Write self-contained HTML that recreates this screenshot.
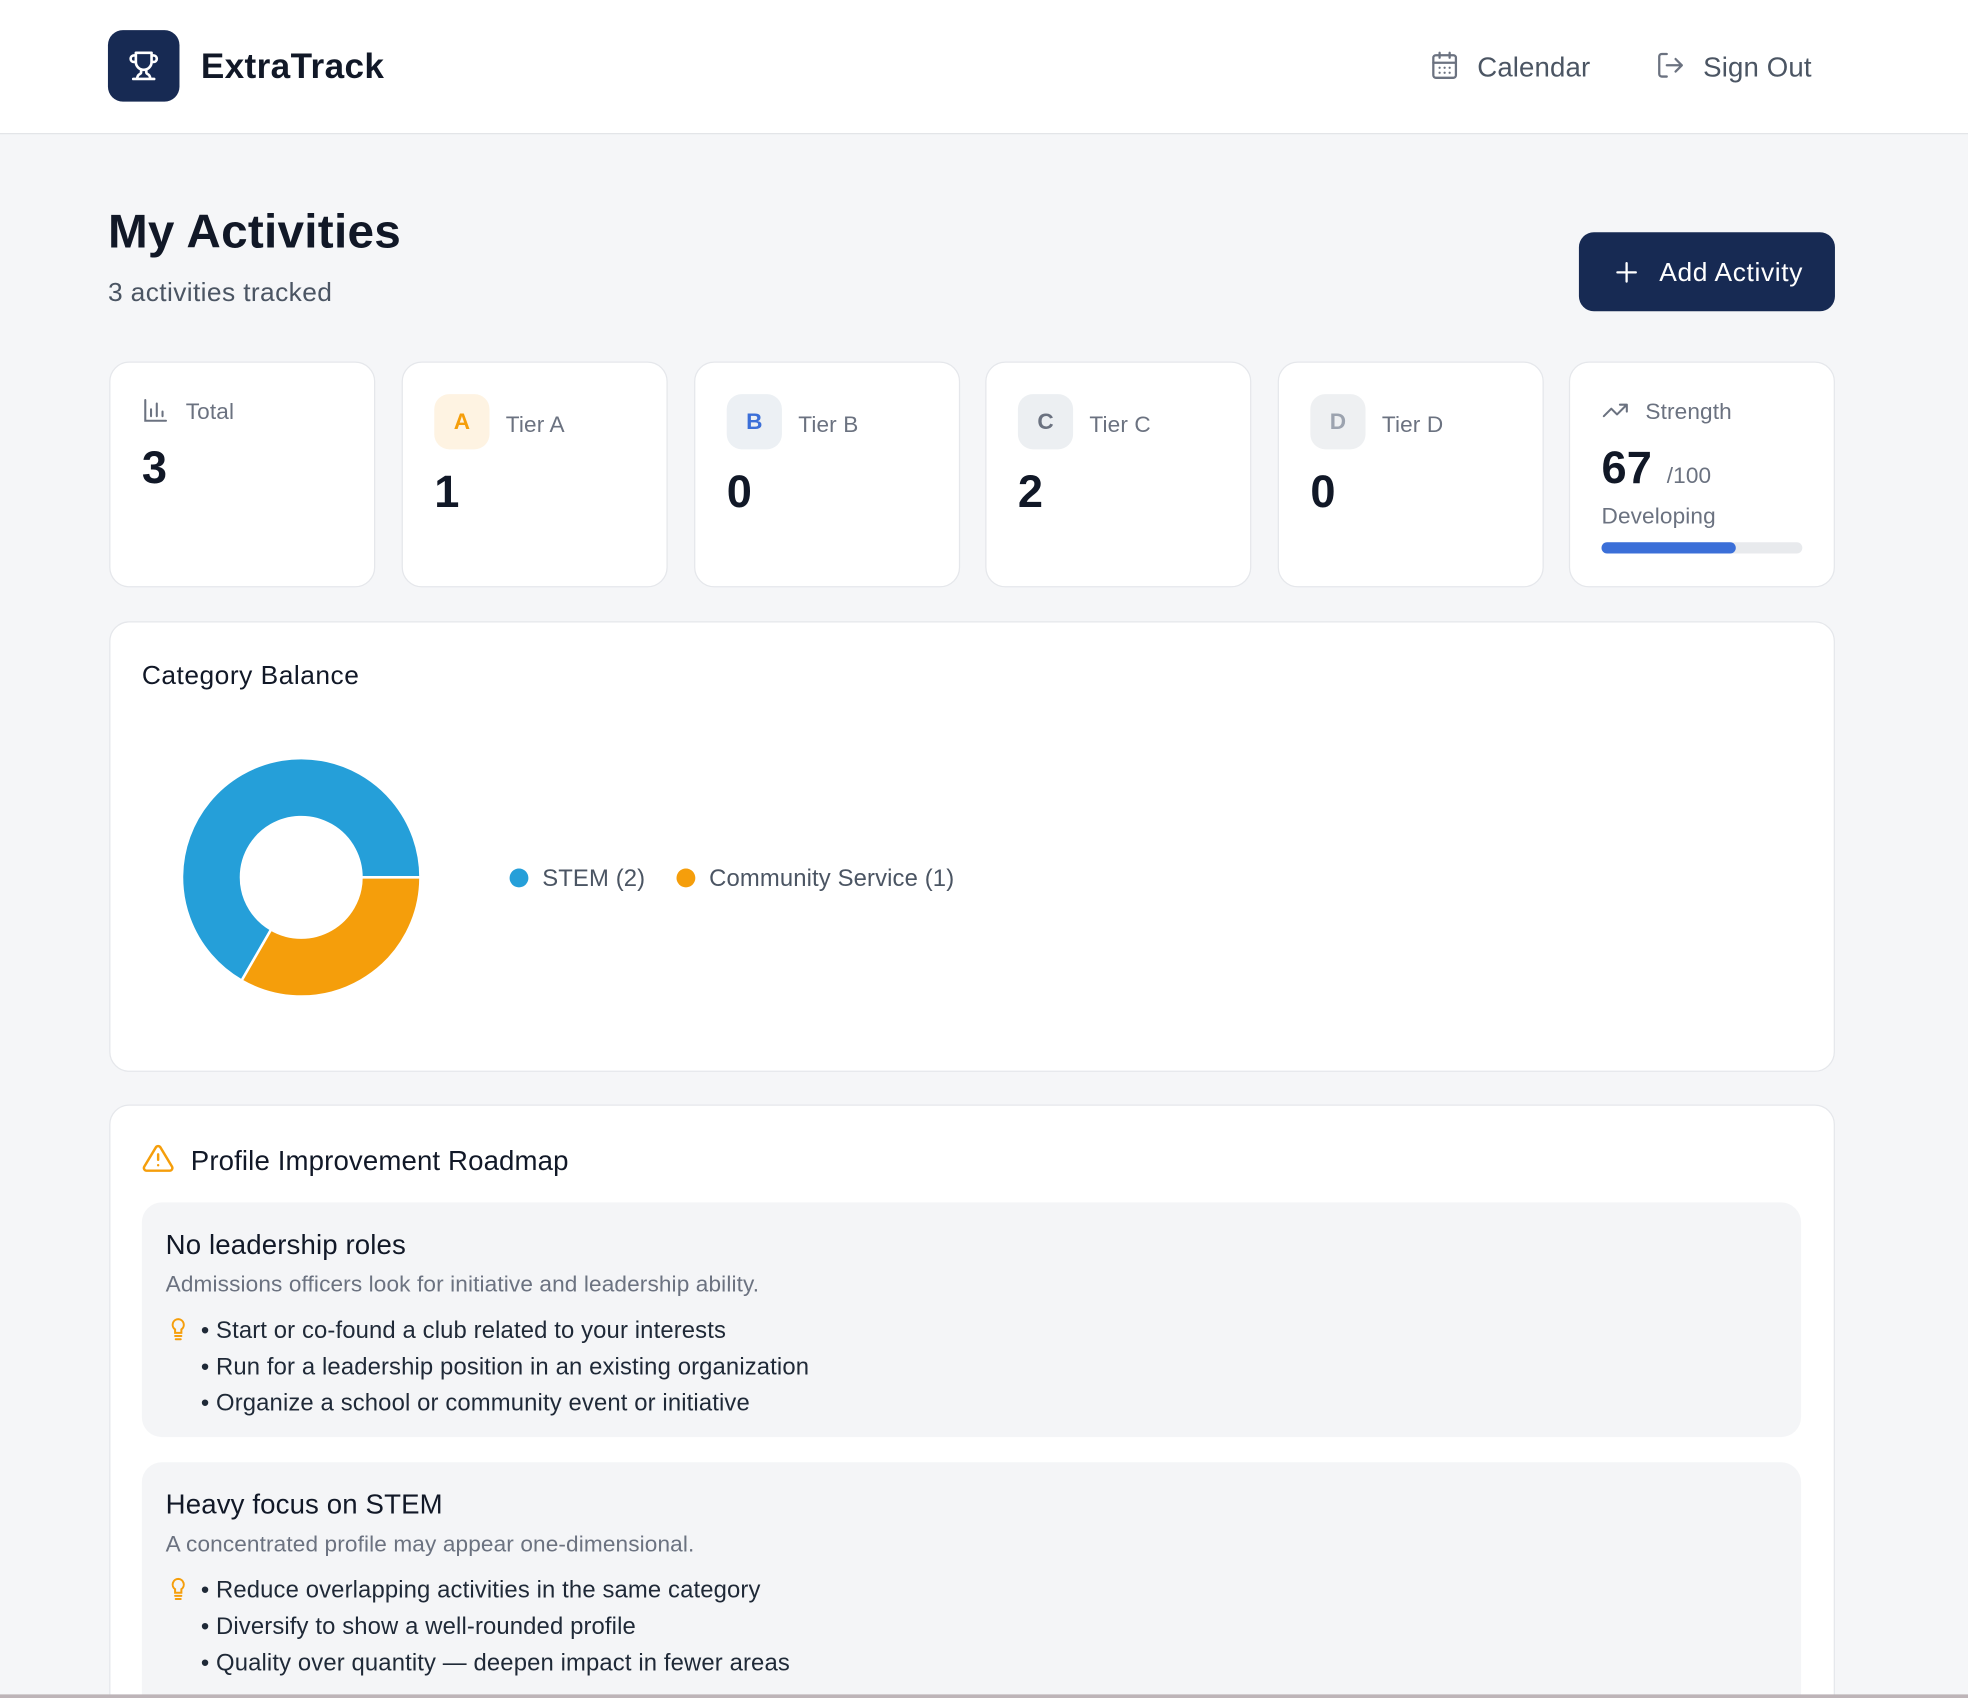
<!DOCTYPE html>
<html><head><meta charset="utf-8"><style>
html,body{margin:0;padding:0;width:1968px;height:1698px;overflow:hidden;background:#f5f6f8;font-family:"Liberation Sans",Arial,sans-serif;}
#w{position:absolute;left:0;top:0;width:1568px;height:1353px;transform:scale(1.25510);transform-origin:0 0;background:#f5f6f8;overflow:hidden;}
.a{position:absolute;}
.hdr{left:0;top:0;width:1568px;height:106px;background:#fff;border-bottom:1px solid #e2e4e8;}
.card{background:#fff;border:1.5px solid #e5e7eb;border-radius:16px;box-sizing:border-box;}
.lbl{font-size:18px;color:#6b7280;}
.num{font-size:36px;font-weight:bold;color:#111827;}
.badge{width:44px;height:44px;border-radius:12px;font-weight:bold;font-size:18px;display:flex;align-items:center;justify-content:center;}
.box{background:#f4f5f7;border-radius:16px;left:113px;width:1322px;}
.t{font-size:22px;color:#111827;}
.d{font-size:18px;color:#6b7280;}
.li{font-size:19px;color:#1f2937;}
.lbl,.num,.t,.d,.li,[style*="font-size"]{margin-top:2px;letter-spacing:0.1px;}
</style></head><body><div id="w">
<div class="a hdr"></div>
<div class="a" style="left:86px;top:24px;width:57px;height:57px;border-radius:12px;background:#172a53;"></div>
<svg class="a" style="left:102px;top:40px" width="25" height="25" viewBox="0 0 24 24" fill="none" stroke="#fff" stroke-width="2" stroke-linecap="round" stroke-linejoin="round"><path d="M6 9H4.5a2.5 2.5 0 0 1 0-5H6M18 9h1.5a2.5 2.5 0 0 0 0-5H18M4 22h16M10 14.66V17c0 .55-.47.98-.97 1.21C7.85 18.75 7 20.24 7 22M14 14.66V17c0 .55.47.98.97 1.21C16.15 18.75 17 20.24 17 22M18 2H6v7a6 6 0 0 0 12 0V2Z"/></svg>
<div class="a" style="left:160px;top:35px;font-size:28px;font-weight:bold;color:#111827;letter-spacing:0.3px;">ExtraTrack</div>
<svg class="a" style="left:1139px;top:40px" width="24" height="24" viewBox="0 0 24 24" fill="none" stroke="#6b7280" stroke-width="1.8" stroke-linecap="round"><rect x="3" y="4" width="18" height="18" rx="2"/><path d="M8 2v4M16 2v4M3 10h18M8 14h.01M12 14h.01M16 14h.01M8 18h.01M12 18h.01M16 18h.01"/></svg>
<div class="a" style="left:1177px;top:39px;font-size:22px;color:#4b5563;">Calendar</div>
<svg class="a" style="left:1319px;top:40px" width="24" height="24" viewBox="0 0 24 24" fill="none" stroke="#6b7280" stroke-width="1.8" stroke-linecap="round" stroke-linejoin="round"><path d="M9 21H5a2 2 0 0 1-2-2V5a2 2 0 0 1 2-2h4M16 17l5-5-5-5M21 12H9"/></svg>
<div class="a" style="left:1357px;top:39px;font-size:22px;color:#4b5563;">Sign Out</div>

<div class="a" style="left:86px;top:162px;font-size:38px;font-weight:bold;color:#111827;letter-spacing:0.2px;">My Activities</div>
<div class="a" style="left:86px;top:220px;font-size:21px;color:#4b5563;letter-spacing:0.3px;">3 activities tracked</div>
<div class="a" style="left:1258px;top:185px;width:204px;height:63px;border-radius:12px;background:#172a53;"></div>
<svg class="a" style="left:1285px;top:206px" width="22" height="22" viewBox="0 0 24 24" fill="none" stroke="#fff" stroke-width="2" stroke-linecap="round"><path d="M12 4v16M4 12h16"/></svg>
<div class="a" style="left:1322px;top:204px;font-size:21px;color:#fff;letter-spacing:0.5px;">Add Activity</div>

<div class="a card" style="left:87px;top:288px;width:212px;height:180px;"></div>
<svg class="a" style="left:113px;top:316px" width="22" height="22" viewBox="0 0 24 24" fill="none" stroke="#6b7280" stroke-width="1.8" stroke-linecap="round"><path d="M3 3v18h18M8 17V11M13 17V6M18 17v-4"/></svg>
<div class="a lbl" style="left:148px;top:316px;">Total</div>
<div class="a num" style="left:113px;top:350px;">3</div>

<div class="a card" style="left:320px;top:288px;width:212px;height:180px;"></div>
<div class="a badge" style="left:346px;top:314px;background:#fef3e2;color:#f59e0b;">A</div>
<div class="a lbl" style="left:403px;top:326px;">Tier A</div>
<div class="a num" style="left:346px;top:369px;">1</div>

<div class="a card" style="left:553px;top:288px;width:212px;height:180px;"></div>
<div class="a badge" style="left:579px;top:314px;background:#ecf0f4;color:#3b6fd8;">B</div>
<div class="a lbl" style="left:636px;top:326px;">Tier B</div>
<div class="a num" style="left:579px;top:369px;">0</div>

<div class="a card" style="left:785px;top:288px;width:212px;height:180px;"></div>
<div class="a badge" style="left:811px;top:314px;background:#eceff2;color:#6b7280;">C</div>
<div class="a lbl" style="left:868px;top:326px;">Tier C</div>
<div class="a num" style="left:811px;top:369px;">2</div>

<div class="a card" style="left:1018px;top:288px;width:212px;height:180px;"></div>
<div class="a badge" style="left:1044px;top:314px;background:#eef0f2;color:#9ca3af;">D</div>
<div class="a lbl" style="left:1101px;top:326px;">Tier D</div>
<div class="a num" style="left:1044px;top:369px;">0</div>

<div class="a card" style="left:1250px;top:288px;width:212px;height:180px;"></div>
<svg class="a" style="left:1276px;top:316px" width="22" height="22" viewBox="0 0 24 24" fill="none" stroke="#6b7280" stroke-width="1.8" stroke-linecap="round" stroke-linejoin="round"><path d="M22 7l-8.5 8.5-5-5L2 17M16 7h6v6"/></svg>
<div class="a lbl" style="left:1311px;top:316px;">Strength</div>
<div class="a num" style="left:1276px;top:350px;">67</div>
<div class="a lbl" style="left:1328px;top:367px;">/100</div>
<div class="a lbl" style="left:1276px;top:399px;">Developing</div>
<div class="a" style="left:1276px;top:432px;width:160px;height:9px;border-radius:5px;background:#e8eaed;"></div>
<div class="a" style="left:1276px;top:432px;width:107px;height:9px;border-radius:5px;background:#3b6fd8;"></div>

<div class="a card" style="left:87px;top:495px;width:1375px;height:359px;"></div>
<div class="a" style="left:113px;top:525px;font-size:21px;color:#111827;letter-spacing:0.4px;">Category Balance</div>
<svg class="a" style="left:140px;top:599px" width="200" height="200" viewBox="-100 -100 200 200">
<path d="M95 0 A95 95 0 1 0 -47.5 82.27 L-24 41.57 A48 48 0 1 1 48 0 Z" fill="#259fd9" stroke="#fff" stroke-width="2"/>
<path d="M95 0 A95 95 0 0 1 -47.5 82.27 L-24 41.57 A48 48 0 0 0 48 0 Z" fill="#f59e0b" stroke="#fff" stroke-width="2"/>
</svg>
<div class="a" style="left:406px;top:692px;width:15px;height:15px;border-radius:50%;background:#259fd9;"></div>
<div class="a" style="left:432px;top:688px;font-size:19px;color:#4b5563;">STEM (2)</div>
<div class="a" style="left:539px;top:692px;width:15px;height:15px;border-radius:50%;background:#f59e0b;"></div>
<div class="a" style="left:565px;top:688px;font-size:19px;color:#4b5563;">Community Service (1)</div>

<div class="a card" style="left:87px;top:880px;width:1375px;height:520px;"></div>
<svg class="a" style="left:113px;top:910px" width="26" height="26" viewBox="0 0 24 24" fill="none" stroke="#f59e0b" stroke-width="1.8" stroke-linecap="round" stroke-linejoin="round"><path d="M10.3 3.9 1.8 18a2 2 0 0 0 1.7 3h17a2 2 0 0 0 1.7-3L13.7 3.9a2 2 0 0 0-3.4 0zM12 9v4M12 17h.01"/></svg>
<div class="a t" style="left:152px;top:910px;">Profile Improvement Roadmap</div>

<div class="a box" style="top:958px;height:187px;"></div>
<div class="a t" style="left:132px;top:977px;">No leadership roles</div>
<div class="a d" style="left:132px;top:1011px;">Admissions officers look for initiative and leadership ability.</div>
<svg class="a" style="left:134px;top:1049px" width="16" height="20" viewBox="0 0 16 20" fill="none" stroke="#f59e0b" stroke-width="1.6" stroke-linecap="round"><path d="M8 2a4.5 4.5 0 0 0-2.5 8.2V13h5v-2.8A4.5 4.5 0 0 0 8 2zM5.5 15.5h5M6 18h4"/></svg>
<div class="a li" style="left:160px;top:1048px;">• Start or co-found a club related to your interests</div>
<div class="a li" style="left:160px;top:1077px;">• Run for a leadership position in an existing organization</div>
<div class="a li" style="left:160px;top:1106px;">• Organize a school or community event or initiative</div>

<div class="a box" style="top:1165px;height:200px;"></div>
<div class="a t" style="left:132px;top:1184px;">Heavy focus on STEM</div>
<div class="a d" style="left:132px;top:1218px;">A concentrated profile may appear one-dimensional.</div>
<svg class="a" style="left:134px;top:1256px" width="16" height="20" viewBox="0 0 16 20" fill="none" stroke="#f59e0b" stroke-width="1.6" stroke-linecap="round"><path d="M8 2a4.5 4.5 0 0 0-2.5 8.2V13h5v-2.8A4.5 4.5 0 0 0 8 2zM5.5 15.5h5M6 18h4"/></svg>
<div class="a li" style="left:160px;top:1255px;">• Reduce overlapping activities in the same category</div>
<div class="a li" style="left:160px;top:1284px;">• Diversify to show a well-rounded profile</div>
<div class="a li" style="left:160px;top:1313px;">• Quality over quantity — deepen impact in fewer areas</div>
<div class="a" style="left:0;top:1350px;width:1568px;height:3px;background:#bdb4b8;"></div>
</div></body></html>
